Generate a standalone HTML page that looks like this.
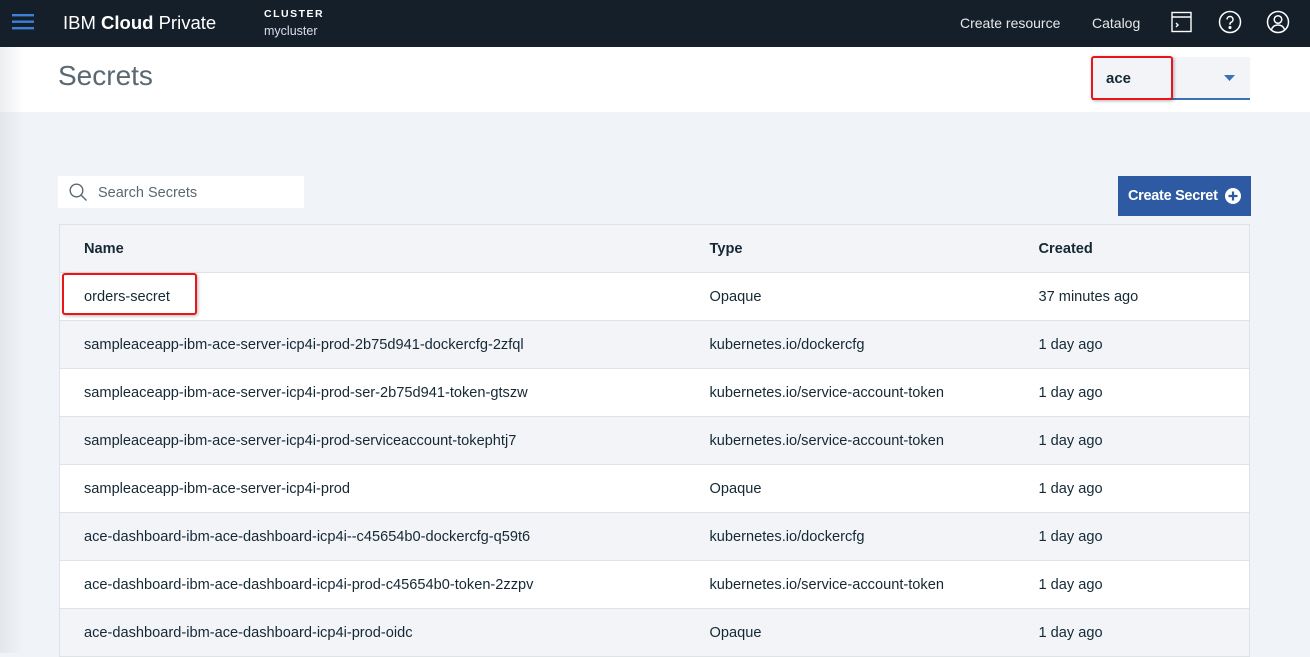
<!DOCTYPE html>
<html><head><style>
*{margin:0;padding:0;box-sizing:border-box}
body{width:1310px;height:653px;overflow:hidden;background:#f0f3f8;font-family:"Liberation Sans",sans-serif;color:#152935;position:relative}
.shade{position:absolute;left:0;top:112px;width:24px;height:541px;background:linear-gradient(90deg,#e3e6eb,rgba(240,243,248,0));}
.top{position:absolute;left:0;top:0;width:1310px;height:47px;background:#141f29;color:#fff}
.band{position:absolute;left:0;top:47px;width:1310px;height:65px;background:#fff}
.band .sh{position:absolute;left:0;top:0;width:24px;height:65px;background:linear-gradient(90deg,#eceef1,#fff)}
.t{position:absolute;white-space:nowrap}
table{position:absolute;left:59px;top:224px;width:1191px;border-collapse:collapse;border:1px solid #dfe3e6;font-size:14.6px}
td,th{height:48px;border-bottom:1px solid #dfe3e6;text-align:left;padding:1px 0 0;font-weight:normal;color:#152935}
th{font-weight:bold}
tr:nth-child(odd){background:#f2f4f8}
tr:nth-child(even){background:#fff}
td:first-child,th:first-child{padding-left:24px;width:650px}
td:nth-child(2),th:nth-child(2){width:329px}
</style></head><body>
<div class="shade"></div>
<div class="top">
 <svg style="position:absolute;left:12px;top:13px" width="22" height="18"><rect y="1" width="22" height="2.4" fill="#3d7fd9"/><rect y="7.5" width="22" height="2.4" fill="#3d7fd9"/><rect y="14" width="22" height="2.4" fill="#3d7fd9"/></svg>
 <div class="t" style="left:63px;top:12px;font-size:18.5px;color:#fff">IBM <b>Cloud</b> Private</div>
 <div class="t" style="left:264px;top:8px;font-size:10.5px;font-weight:bold;letter-spacing:1.5px">CLUSTER</div>
 <div class="t" style="left:264px;top:24px;font-size:12.5px;color:#dde">mycluster</div>
 <div class="t" style="left:960px;top:15px;font-size:14px;color:#e8e8e8">Create resource</div>
 <div class="t" style="left:1092px;top:15px;font-size:14px;color:#e8e8e8">Catalog</div>
 <svg style="position:absolute;left:1171px;top:11px" width="22" height="22" fill="none" stroke="#fff" stroke-width="1.4"><rect x="1" y="1.5" width="19" height="19"/><line x1="1" y1="6" x2="20" y2="6"/><path d="M5 12l2 2-2 2"/></svg>
 <svg style="position:absolute;left:1218px;top:10px" width="24" height="24" fill="none" stroke="#fff" stroke-width="1.5"><circle cx="12" cy="12" r="10.5"/><path d="M9 9.5a3 3 0 1 1 4 2.8c-.8.4-1 1-1 1.8v.7"/><circle cx="12" cy="17.5" r=".8" fill="#fff"/></svg>
 <svg style="position:absolute;left:1266px;top:10px" width="24" height="24" fill="none" stroke="#fff" stroke-width="1.5"><circle cx="12" cy="12" r="10.5"/><circle cx="12" cy="9.5" r="3.8"/><path d="M5.5 19.5c1-3 3.5-4.5 6.5-4.5s5.5 1.5 6.5 4.5"/></svg>
</div>
<div class="band"><div class="sh"></div>
 <div class="t" style="left:58px;top:13px;font-size:28px;color:#5a6872">Secrets</div>
 <div style="position:absolute;left:1092px;top:10px;width:158px;height:43px;background:#f2f4f8;border-bottom:2px solid #3d70b2"></div>
 <div style="position:absolute;left:1091px;top:9px;width:82px;height:44px;border:2px solid #e8151b;border-radius:3px;box-shadow:1px 1px 3px rgba(0,0,0,.3)"></div>
 <div class="t" style="left:1106px;top:23px;font-size:15px;font-weight:bold">ace</div>
 <svg style="position:absolute;left:1224px;top:28px" width="11" height="6"><path d="M0 0h11L5.5 6z" fill="#3d70b2"/></svg>
</div>
<div style="position:absolute;left:58px;top:176px;width:246px;height:32px;background:#fff"></div>
<svg style="position:absolute;left:69px;top:183px" width="19" height="19" fill="none" stroke="#5a6872" stroke-width="1.4"><circle cx="7.5" cy="7.5" r="6.3"/><line x1="12" y1="12" x2="17.5" y2="17.5"/></svg>
<div class="t" style="left:98px;top:185px;font-size:14.5px;color:#5a6872">Search Secrets</div>
<div style="position:absolute;left:1118px;top:176px;width:133px;height:40px;background:#2d5aa3"></div>
<div class="t" style="left:1128px;top:188px;font-size:14.5px;font-weight:bold;color:#fff;letter-spacing:-0.3px">Create Secret</div>
<svg style="position:absolute;left:1224px;top:187px" width="18" height="18"><circle cx="9" cy="9" r="8" fill="#fff"/><path d="M9 4.5v9M4.5 9h9" stroke="#2d5aa3" stroke-width="2.2"/></svg>
<table>
<tr><th>Name</th><th>Type</th><th>Created</th></tr>
<tr><td>orders-secret</td><td>Opaque</td><td>37 minutes ago</td></tr>
<tr><td>sampleaceapp-ibm-ace-server-icp4i-prod-2b75d941-dockercfg-2zfql</td><td>kubernetes.io/dockercfg</td><td>1 day ago</td></tr>
<tr><td>sampleaceapp-ibm-ace-server-icp4i-prod-ser-2b75d941-token-gtszw</td><td>kubernetes.io/service-account-token</td><td>1 day ago</td></tr>
<tr><td>sampleaceapp-ibm-ace-server-icp4i-prod-serviceaccount-tokephtj7</td><td>kubernetes.io/service-account-token</td><td>1 day ago</td></tr>
<tr><td>sampleaceapp-ibm-ace-server-icp4i-prod</td><td>Opaque</td><td>1 day ago</td></tr>
<tr><td>ace-dashboard-ibm-ace-dashboard-icp4i--c45654b0-dockercfg-q59t6</td><td>kubernetes.io/dockercfg</td><td>1 day ago</td></tr>
<tr><td>ace-dashboard-ibm-ace-dashboard-icp4i-prod-c45654b0-token-2zzpv</td><td>kubernetes.io/service-account-token</td><td>1 day ago</td></tr>
<tr><td>ace-dashboard-ibm-ace-dashboard-icp4i-prod-oidc</td><td>Opaque</td><td>1 day ago</td></tr>
</table>
<div style="position:absolute;left:62px;top:273px;width:135px;height:42px;border:2px solid #e8151b;border-radius:3px;box-shadow:1px 1px 3px rgba(0,0,0,.3)"></div>
</body></html>
